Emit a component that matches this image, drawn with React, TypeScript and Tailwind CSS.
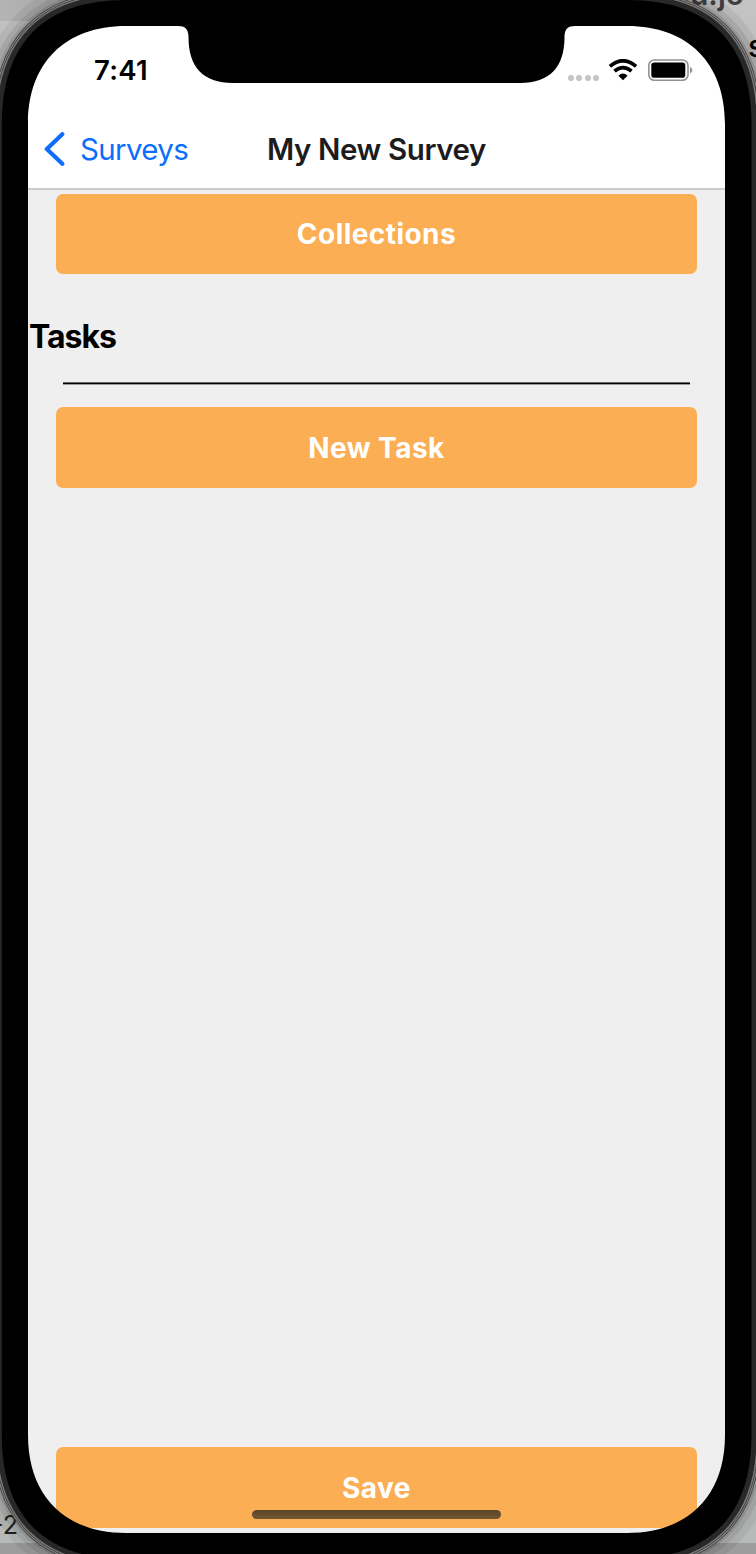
import React from "react";

const SCREEN =
  "M126 26H627C688 26 725 63 725 124V1435C725 1496 688 1533 627 1533H126C65 1533 28 1496 28 1435V124C28 63 65 26 126 26Z";

const BODY =
  "M126 0H627.500C709 0 751.500 43 751.500 124V1435C751.500 1516 709 1559 627.500 1559H126C44 1559 1.800 1516 1.800 1435V124C1.800 43 44 0 126 0Z";

function DeviceFrame() {
  return (
    <svg
      className="pointer-events-none absolute inset-0"
      width="756"
      height="1554"
      viewBox="0 0 756 1554"
      fill="none"
      aria-hidden="true"
    >
      <defs>
        <clipPath id="outside-screen">
          <path clipRule="evenodd" d={`M-60 -60H816V1614H-60Z${SCREEN}`} />
        </clipPath>
      </defs>
      <g clipPath="url(#outside-screen)">
        <path d={BODY} stroke="#000000" strokeOpacity="0.06" strokeWidth="48" />
        <path d={BODY} stroke="#000000" strokeOpacity="0.08" strokeWidth="34" />
        <path d={BODY} stroke="#000000" strokeOpacity="0.1" strokeWidth="24" />
        <path d={BODY} stroke="#3c3c3c" strokeWidth="18.500" />
        <path d={BODY} stroke="#858585" strokeWidth="17" />
        <path d={BODY} stroke="#3a3a3a" strokeWidth="14.800" />
        <path d={BODY} stroke="#777777" strokeWidth="13.400" />
        <path d={BODY} stroke="#282828" strokeWidth="10.500" />
        <path d={BODY} fill="#000000" />
      </g>
      <path
        fill="#000000"
        d="M178 27V26C185 26 188.5 29 188.5 37C188.5 67 203 83 233 83H520C550 83 564.500 67 564.500 37C564.500 29 568 26 575 26V25H178Z"
      />
    </svg>
  );
}

function WifiIcon() {
  return (
    <svg width="30" height="22" viewBox="0 0 30 22" fill="none" aria-hidden="true">
      <path d="M1.900 7.300Q15 -3.800 28.100 7.300" stroke="#000" strokeWidth="3.700" />
      <path d="M6.500 12.200Q15 5 23.500 12.200" stroke="#000" strokeWidth="3.700" />
      <path d="M10.400 16.700Q15 12.400 19.600 16.700L15 21.300Z" fill="#000" />
    </svg>
  );
}

function BatteryIcon() {
  return (
    <svg width="45" height="23" viewBox="0 0 45 23" fill="none" aria-hidden="true">
      <rect x="0.800" y="1" width="39.200" height="20.200" rx="5.500" stroke="#929292" strokeWidth="1.600" />
      <rect x="3.300" y="3.500" width="34" height="15.200" rx="2.800" fill="#000" />
      <path d="M42 7.800Q44.300 9 44.300 11.300Q44.300 13.500 42 14.500Z" fill="#929292" />
    </svg>
  );
}

function StatusBar() {
  return (
    <div className="flex h-[84px] items-start justify-between pt-[29px] pl-[66px] pr-[32px]">
      <span className="-mt-px text-[27.500px] leading-[32px] font-semibold tracking-[0.300px] text-black">7:41</span>
      <div className="flex h-[30px] items-center">
        <div className="mt-[15px] mr-[9px] flex gap-[2.300px]">
          {[0, 1, 2, 3].map((dot) => (
            <span key={dot} className="size-[6px] rounded-full bg-[#c4c4c4]" />
          ))}
        </div>
        <WifiIcon />
        <span className="ml-[10px]">
          <BatteryIcon />
        </span>
      </div>
    </div>
  );
}

function NavBar() {
  return (
    <header className="grid h-[80px] shrink-0 grid-cols-[1fr_auto_1fr] items-center border-b-2 border-[#cbcccc]">
      <button className="flex items-center pl-[16px] text-[#0d6efd]">
        <svg width="21" height="34" viewBox="0 0 21 34" fill="none" aria-hidden="true">
          <path
            d="M18.300 2.200L2.800 17L18.300 31.800"
            stroke="currentColor"
            strokeWidth="4.200"
            strokeLinecap="round"
            strokeLinejoin="round"
          />
        </svg>
        <span className="ml-[15px] pb-px text-[29.500px] leading-[36px] tracking-[-0.650px]">Surveys</span>
      </button>
      <h1 className="text-[29.500px] leading-[36px] font-semibold tracking-[-0.400px] text-[#1c1c1e]">
        My New Survey
      </h1>
    </header>
  );
}

function ActionButton({ children }: { children: React.ReactNode }) {
  return (
    <button className="mx-[28px] flex h-[80.600px] shrink-0 items-center justify-center rounded-[7px] bg-[#fbae54] pt-[0.500px] text-[28px] leading-[36px] font-bold tracking-[0.450px] text-white">
      {children}
    </button>
  );
}

export default function App() {
  return (
    <div className="relative h-[1554px] w-[756px] overflow-hidden bg-[#2a2a2a] font-['Inter','Liberation_Sans',sans-serif]">
      <div className="absolute top-0 left-0 h-[120px] w-full bg-linear-to-b from-[#c4c4c4] to-[#b8b8b8]" />
      <div className="absolute top-0 left-0 h-[21px] w-[80px] bg-linear-to-r from-[#b4b4b4] to-[#a6a6a6]" />
      <div className="absolute bottom-0 left-0 h-[120px] w-full bg-[#b8baba]" />
      <div className="absolute bottom-0 left-0 h-[11px] w-full bg-[#9c9c9c]" />
      <span className="absolute top-[-24px] left-[690px] text-[30px] leading-[36px] font-semibold text-[#424242]">u.jo</span>
      <span className="absolute top-[28px] left-[748px] text-[30px] leading-[36px] font-medium text-black">s</span>
      <span className="absolute top-[1509px] left-[-8px] text-[25px] leading-[32px] text-[#222222]">-2</span>

      <div className="relative flex h-full flex-col pt-[26px] pr-[31px] pb-[21px] pl-[28px]">
        <main className="flex min-h-0 flex-1 flex-col bg-[#efefef]">
          <div className="shrink-0 bg-white">
            <StatusBar />
            <NavBar />
          </div>
          <div className="flex min-h-0 flex-1 flex-col pt-[3.600px] pb-[5px]">
            <ActionButton>Collections</ActionButton>
            <h2 className="mt-[42.800px] pl-px text-[32px] leading-[40px] font-bold tracking-[-1px] text-black">Tasks</h2>
            <div className="mx-[35px] mt-[25px] h-[3px] shrink-0 border-t border-b border-t-[#686868] border-b-[#999999] bg-black" />
            <div className="mt-[22.470px] flex flex-col">
              <ActionButton>New Task</ActionButton>
            </div>
            <div className="mt-auto flex flex-col">
              <ActionButton>Save</ActionButton>
            </div>
          </div>
        </main>
      </div>

      <div className="absolute top-[1510px] left-[252px] h-[9px] w-[249px] rounded-full bg-linear-to-b from-[#5c462a] to-[#755632]" />
      <DeviceFrame />
    </div>
  );
}
